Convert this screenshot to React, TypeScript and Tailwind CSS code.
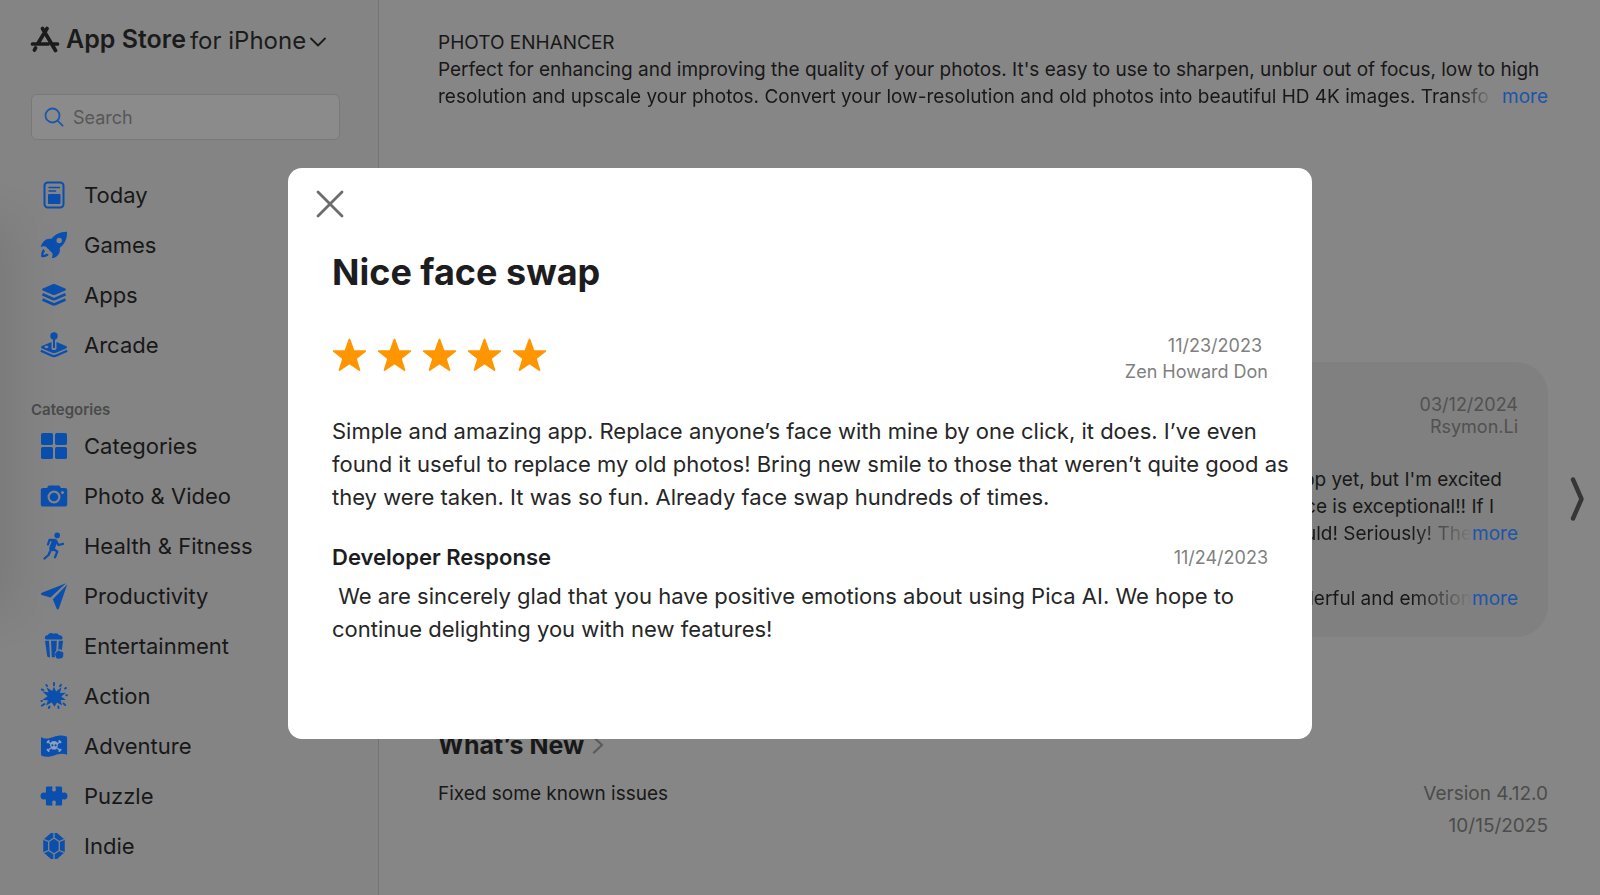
import React from 'react'
import type { ReactNode } from 'react'

type NavItem = { label: string; icon: ReactNode }

const mainNav: NavItem[] = [
  {
    label: 'Today',
    icon: (
      <>
        <rect x="4.500" y="1.500" width="19" height="25" rx="3.200" fill="none" stroke="currentColor" strokeWidth="2" />
        <path d="M9 6.500h10.500M9 10h6.500" stroke="currentColor" strokeWidth="1.400" strokeLinecap="round" />
        <rect x="8" y="13" width="12.500" height="10" rx="1" />
      </>
    ),
  },
  {
    label: 'Games',
    icon: (
      <path
        fillRule="evenodd"
        d="M27 .8C20 .6 15 3.500 11.200 8c-3.500-.6-6.500.8-8.500 3.800C1.800 13.200.9 15 .8 16c2-.8 3.700-.8 5.200-.2l6.200 6.200c.8 1.500.2 3.200-.4 5.300 1.700-.2 3.400-.8 4.700-1.800 3-2.200 3.900-5.500 3.200-8.500C24.300 13.500 27.300 8.500 27 .8ZM19.200 6.800a2.700 2.700 0 1 1 0 5.400 2.700 2.700 0 0 1 0-5.400ZM3.800 18C1.600 19.300.9 22.500 1.200 26c3 .6 6.300-.1 7.600-2.500l-2.600-.9c-.8 1-1.600 1.400-2.600 1.300-.1-1.300.2-2.400 1.400-3.200Z"
      />
    ),
  },
  {
    label: 'Apps',
    icon: (
      <>
        <path d="M12.600 3.200a3.500 3.500 0 0 1 2.800 0l9.800 4.300c1 .5 1 1.400 0 1.900l-9.800 4.300a3.500 3.500 0 0 1-2.800 0L2.800 9.400c-1-.5-1-1.400 0-1.900Z" />
        <path
          d="M2.500 13.300l10.100 4.500a3.500 3.500 0 0 0 2.800 0l10.100-4.500M2.500 18.500l10.100 4.500a3.500 3.500 0 0 0 2.800 0l10.100-4.500"
          fill="none"
          stroke="currentColor"
          strokeWidth="2.700"
        />
      </>
    ),
  },
  {
    label: 'Arcade',
    icon: (
      <>
        <circle cx="14" cy="5" r="3.700" />
        <path d="M13 8h2v9h-2z" />
        <path
          fillRule="evenodd"
          d="M11.500 11v6.500c0 2 5 2 5 0V11l9.500 4c1.300.7 1.300 1.800 0 2.400l-10 4.300a5 5 0 0 1-4 0L2 17.400c-1.300-.6-1.300-1.700 0-2.400ZM6.500 14.800c-1.300 0-2 .6-2 1.200s.7 1.200 2 1.200 2-.6 2-1.200-.7-1.200-2-1.200Z"
        />
        <path
          d="M.8 19.800l10.700 4.800a6 6 0 0 0 5 0l10.700-4.800"
          fill="none"
          stroke="currentColor"
          strokeWidth="2.200"
        />
      </>
    ),
  },
]

const categoryNav: NavItem[] = [
  {
    label: 'Categories',
    icon: (
      <>
        <rect x="1" y="1" width="12" height="12" rx="1.800" />
        <rect x="15" y="1" width="12" height="12" rx="1.800" />
        <rect x="1" y="15" width="12" height="12" rx="1.800" />
        <rect x="15" y="15" width="12" height="12" rx="1.800" />
      </>
    ),
  },
  {
    label: 'Photo & Video',
    icon: (
      <path
        fillRule="evenodd"
        d="M9.500 3.500h9c.8 0 1.200.3 1.600 1l.8 1.500H25c1.500 0 2.200.8 2.200 2.200v14c0 1.500-.8 2.300-2.200 2.300H3c-1.500 0-2.200-.8-2.200-2.300v-14C.8 6.800 1.600 6 3 6h4.100l.8-1.500c.4-.7.800-1 1.600-1ZM14 8.500a6.500 6.500 0 1 0 0 13 6.500 6.500 0 0 0 0-13Zm0 2.200a4.300 4.300 0 1 1 0 8.600 4.300 4.300 0 0 1 0-8.600ZM22.500 9a1.500 1.500 0 1 0 0 3 1.500 1.500 0 0 0 0-3Z"
      />
    ),
  },
  {
    label: 'Health & Fitness',
    icon: (
      <>
        <circle cx="17.200" cy="3.400" r="2.800" />
        <path d="M14.500 9.500L12 16.500" fill="none" stroke="currentColor" strokeWidth="5.500" strokeLinecap="round" />
        <path
          d="M13 8H9.500L8 12.500M16 9l2.500 4 4.500-1.200M12.500 16.500l4.800 3-2.300 5.800M10 19.500L8.500 23l-4 3.500"
          fill="none"
          stroke="currentColor"
          strokeWidth="2.300"
          strokeLinecap="round"
          strokeLinejoin="round"
        />
      </>
    ),
  },
  {
    label: 'Productivity',
    icon: (
      <path d="M26 1.300L1.800 10.800c-1.200.5-1.200 1.700 0 2.100l8.700 2.600L26 1.300ZM27.200 2.500L12.800 17.200l3.800 9.300c.6 1.300 1.800 1.300 2.300 0Z" />
    ),
  },
  {
    label: 'Entertainment',
    icon: (
      <>
        <path d="M6 7.500C4 6 5 3 7.800 3.300 8.500.8 12 .2 13.500 1.800c2-1.300 5-.6 5.500 1.500 3-.5 4.500 2.500 3 4.200Z" />
        <path d="M5 8.700h4l1 16.500H8.500c-.8 0-1.200-.5-1.300-1.200ZM11 8.700h5.800l-.5 9.800c-1.500 1.500-2 3.800-1.300 6.700h-3.200ZM18.700 8.700h4.400l-1.300 9.500c-1-1.200-2.400-1.300-3.500-.5Z" />
        <path d="M16.500 20.200c.5-1.700 3-2 4-.6 2.200-.4 3.500 1.600 2.700 3.300.3 2.300-1.700 4-3.700 3.500-2 1-4-.5-3.800-2.400-1-.9-.7-3.200.8-3.800Z" />
      </>
    ),
  },
  {
    label: 'Action',
    icon: (
      <>
        <path d="M14 4.500l2 5 5.500-4.200-1.600 5.700 6-.3-4.600 3.800 4.500 3.600-5.200-.2 1.300 5.500-4.900-3-2.500 4.300-2.800-4.300-5.600 3 1.800-5.200-5.500-.2 5.200-3.800L2.500 9.500l6 .7L6.500 5.300l5.700 3.700Z" />
        <path
          d="M14 1v2.200M21 2.700l-1 1.500M6.300 3l.8 1M1.800 7.500l1.500.6M25 6.500l1-.6M26.300 13.200h.6M1.800 23.700L4.500 22M23.500 21.500l1.800 1.600M9.500 24.500l-.7 1.500M18.300 24.500l.3 1.500M1.500 19l.5-.1"
          stroke="currentColor"
          strokeWidth="1.900"
          strokeLinecap="round"
        />
      </>
    ),
  },
  {
    label: 'Adventure',
    icon: (
      <>
        <path d="M1 5.200c5 2.400 8.500 1 12.500-.3C18 3.500 22 2.900 26 4.300c.8.300 1.100.7 1.100 1.500v17c-5-2-9-.6-13 .7-4.500 1.400-8.500 2-12.300.3-.6-.3-.8-.7-.8-1.300Z" />
        <g stroke="#8ba0bf" fill="#8ba0bf" strokeLinecap="round">
          <path d="M8 10l12 8M20 10L8 18" strokeWidth="1.500" />
          <path d="M7.500 10.300h.1M8.600 9h.1M20.500 10.300h.1M19.300 9h.1M7.500 17.700h.1M8.600 19h.1M20.500 17.700h.1M19.300 19h.1" strokeWidth="1.900" />
          <path d="M14 9c2.500 0 4 1.700 4 3.800 0 1.300-.7 2.200-1.700 2.800v2h-4.600v-2c-1-.6-1.700-1.500-1.700-2.800C10 10.700 11.500 9 14 9Z" stroke="none" />
        </g>
        <circle cx="12.400" cy="13.300" r="1.100" />
        <circle cx="15.600" cy="13.300" r="1.100" />
      </>
    ),
  },
  {
    label: 'Puzzle',
    icon: (
      <path d="M7.500 4.500h4c1 0 1.300.7.900 1.500-.9 2 0 3.600 1.600 3.600s2.500-1.600 1.600-3.600c-.4-.8-.1-1.500.9-1.500h4c1 0 1.600.6 1.600 1.600v3.600c0 1 .5 1.300 1.400 1 2.200-.7 4 .8 4 3.300s-1.800 4-4 3.300c-.9-.3-1.400 0-1.400 1v3.600c0 1-.6 1.600-1.600 1.600h-4c-1 0-1.300-.7-.9-1.500.9-2 0-3.600-1.600-3.600s-2.500 1.600-1.600 3.600c.4.800.1 1.500-.9 1.500h-4c-1 0-1.600-.6-1.600-1.600v-3.600c0-1-.5-1.300-1.400-1-2.200.7-4-.8-4-3.300s1.800-4 4-3.300c.9.300 1.400 0 1.400-1V6.100c0-1 .6-1.600 1.600-1.600Z" />
    ),
  },
  {
    label: 'Indie',
    icon: (
      <>
        <path d="M11 1.500h6l7.200 6.200v12.600L17 26.500h-6l-7.200-6.200V7.700Z" stroke="currentColor" strokeLinejoin="round" />
        <path
          d="M14 6l5.300 3.500v9L14 22l-5.300-3.500v-9ZM14 .8V6M24.600 7.300l-5.300 2.200M24.600 20.700l-5.300-2.200M14 27.200V22M3.400 20.700l5.300-2.200M3.400 7.300l5.300 2.200"
          fill="none"
          stroke="#848484"
          strokeWidth="1.300"
        />
      </>
    ),
  },
]

function NavList({ items }: { items: NavItem[] }) {
  return (
    <ul className="flex flex-col">
      {items.map((item) => (
        <li key={item.label} className="pb-[2px]">
          <a href="#" className="flex h-12 items-center gap-4 pl-10 text-[22px] text-[#181818]">
            <svg viewBox="0 0 28 28" className="h-7 w-7 shrink-0 text-[#0b4fae]" fill="currentColor" aria-hidden="true">
              {item.icon}
            </svg>
            {item.label}
          </a>
        </li>
      ))}
    </ul>
  )
}

function Sidebar() {
  return (
    <aside className="relative w-[379px] shrink-0 border-r border-[#747474] bg-[#848484]">
      <div className="absolute top-56 -left-10 h-96 w-12 bg-black/10 blur-xl" />
      <button className="flex h-20 items-center pl-[30px] text-[#1b1b1b]">
        <svg viewBox="0 0 30 28" className="h-7 w-[30px]" fill="none" stroke="currentColor" strokeWidth="3.700" aria-hidden="true">
          <path d="M12.500 2.500L25.500 24.500M17 2.500L8.500 16.500M2.500 18H18M23 18h4.500M5.500 22L4.500 24" strokeLinecap="round" />
        </svg>
        <span className="ml-[6px] text-[25px] font-semibold">App Store</span>
        <span className="ml-1 pt-[2px] text-[24px]">for iPhone</span>
        <svg viewBox="0 0 16 10" className="mt-1 ml-1 h-[10px] w-4" fill="none" stroke="currentColor" strokeWidth="1.800" aria-hidden="true">
          <path d="M1 1.500l7 7 7-7" strokeLinecap="round" strokeLinejoin="round" />
        </svg>
      </button>

      <label className="mt-[14px] mr-[38px] ml-[31px] flex h-[46px] items-center gap-[9px] rounded-md border border-[#797979] bg-[#8b8b8b] px-3">
        <svg viewBox="0 0 20 20" className="h-5 w-5 shrink-0" fill="none" stroke="#1f58a8" strokeWidth="1.800" aria-hidden="true">
          <circle cx="8.500" cy="8.500" r="7" />
          <path d="M13.600 13.600l5 5" strokeLinecap="round" />
        </svg>
        <input
          type="search"
          aria-label="Search"
          placeholder="Search"
          className="w-full min-w-0 bg-transparent text-[18px] outline-none placeholder:text-[#575757]"
        />
      </label>

      <nav className="pt-[31px]">
        <NavList items={mainNav} />
        <h2 className="mt-[29px] mb-[2px] pl-[31px] text-[15px] leading-5 font-semibold text-[#4a4a4a]">Categories</h2>
        <NavList items={categoryNav} />
      </nav>
    </aside>
  )
}

function MoreButton() {
  return <button className="absolute right-0 bottom-0 text-[#1b55aa]">more</button>
}

function ReviewCard() {
  return (
    <article className="ml-auto h-[275px] w-[510px] rounded-[32px] bg-[#808080] px-[30px] pt-8">
      <div className="flex flex-col text-right text-[18px] leading-[22px] text-[#515151]">
        <span>03/12/2024</span>
        <span>Rsymon.Li</span>
      </div>
      <div className="mt-[28px] text-right text-[19px] leading-[27px] whitespace-nowrap">
        <p className="pr-4">app yet, but I'm excited</p>
        <p className="pr-6">face is exceptional!! If I</p>
        <div className="relative">
          <p className="mr-[46px] bg-linear-to-l from-transparent to-[#181818] to-[60px] bg-clip-text text-transparent">
            would! Seriously! The
          </p>
          <MoreButton />
        </div>
        <div className="relative mt-[38px]">
          <p className="mr-[46px] bg-linear-to-l from-transparent to-[#181818] to-[60px] bg-clip-text text-transparent">
            wonderful and emotion
          </p>
          <MoreButton />
        </div>
      </div>
    </article>
  )
}

function MainContent() {
  return (
    <main className="flex min-w-0 flex-1 flex-col bg-[#868686] pr-[52px] pl-[59px]">
      <section className="relative mt-[29px] text-[19px] leading-[27px] whitespace-nowrap">
        <h2>PHOTO ENHANCER</h2>
        <p>Perfect for enhancing and improving the quality of your photos. It's easy to use to sharpen, unblur out of focus, low to high</p>
        <p className="mr-[56px] bg-linear-to-l from-transparent to-[#181818] to-[32px] bg-clip-text text-transparent">
          resolution and upscale your photos. Convert your low-resolution and old photos into beautiful HD 4K images. Transfo
        </p>
        <MoreButton />
      </section>

      <section className="relative mt-[252px]">
        <ReviewCard />
        <button aria-label="Next reviews" className="absolute top-[114px] -right-9">
          <svg viewBox="0 0 14 46" className="h-[46px] w-[14px]" fill="none" stroke="#363636" strokeWidth="4.400" aria-hidden="true">
            <path d="M3 3.500l8.500 19.500L3 42.500" strokeLinecap="round" strokeLinejoin="round" />
          </svg>
        </button>
      </section>

      <section className="mt-[90px]">
        <h2 className="flex items-center gap-2 text-[25px] leading-9 font-bold">
          What’s New
          <svg viewBox="0 0 12 18" className="h-[18px] w-3" fill="none" stroke="#5b5b5b" strokeWidth="2.300" aria-hidden="true">
            <path d="M2 1.500L10 9l-8 7.500" strokeLinecap="round" strokeLinejoin="round" />
          </svg>
        </h2>
        <div className="mt-[15px] flex justify-between text-[19px] leading-8">
          <p>Fixed some known issues</p>
          <div className="text-right text-[#4c4c4c]">
            <p>Version 4.12.0</p>
            <p>10/15/2025</p>
          </div>
        </div>
      </section>
    </main>
  )
}

function ReviewDialog() {
  return (
    <div className="absolute inset-0 flex justify-center pt-[168px]">
      <div role="dialog" aria-labelledby="review-title" className="h-[571px] w-full max-w-[1024px] rounded-[14px] bg-white px-[44px] pt-5 text-[#262626]">
        <button aria-label="Close" className="-ml-[18px] block">
          <svg viewBox="0 0 32 32" className="h-8 w-8" fill="none" stroke="#6c6c6c" strokeWidth="2.800" aria-hidden="true">
            <path d="M4 4l24 24M28 4L4 28" strokeLinecap="round" />
          </svg>
        </button>
        <h1 id="review-title" className="mt-7 text-[36px] leading-[48px] font-bold text-[#1d1d1f]">Nice face swap</h1>

        <div className="mt-[37px] flex items-start justify-between">
          <div className="flex gap-[10px] pt-[5px]" role="img" aria-label="5 out of 5 stars">
            {[0, 1, 2, 3, 4].map((i) => (
              <svg key={i} viewBox="0 0 34 33" className="h-[34px] w-[35px]" fill="#ff9500">
                <path
                  d="M17 1.500l4 11.200h11.300l-9.200 7.200 3.500 11.200L17 24.500l-9.600 6.600 3.500-11.200-9.200-7.200H13Z"
                  stroke="#ff9500"
                  strokeWidth="1.800"
                  strokeLinejoin="round"
                />
              </svg>
            ))}
          </div>
          <div className="text-right text-[18px] leading-[26px] text-[#808080]">
            <p className="pr-[6px]">11/23/2023</p>
            <p>Zen Howard Don</p>
          </div>
        </div>

        <p className="-mr-6 mt-[30px] text-[22px] leading-[33px] whitespace-nowrap">
          Simple and amazing app. Replace anyone’s face with mine by one click, it does. I’ve even
          <br />
          found it useful to replace my old photos! Bring new smile to those that weren’t quite good as
          <br />
          they were taken. It was so fun. Already face swap hundreds of times.
        </p>

        <div className="mt-[27px] flex items-center justify-between leading-[33px]">
          <h2 className="text-[22px] font-semibold text-[#1d1d1f]">Developer Response</h2>
          <span className="text-[18px] text-[#808080]">11/24/2023</span>
        </div>
        <p className="mt-[6px] text-[22px] leading-[33px] whitespace-pre">
          {' We are sincerely glad that you have positive emotions about using Pica AI. We hope to'}
          <br />
          continue delighting you with new features!
        </p>
      </div>
    </div>
  )
}

export default function App() {
  return (
    <div className="relative flex min-h-screen overflow-hidden bg-[#868686] font-['Inter',sans-serif] text-[#181818]">
      <Sidebar />
      <MainContent />
      <ReviewDialog />
    </div>
  )
}
